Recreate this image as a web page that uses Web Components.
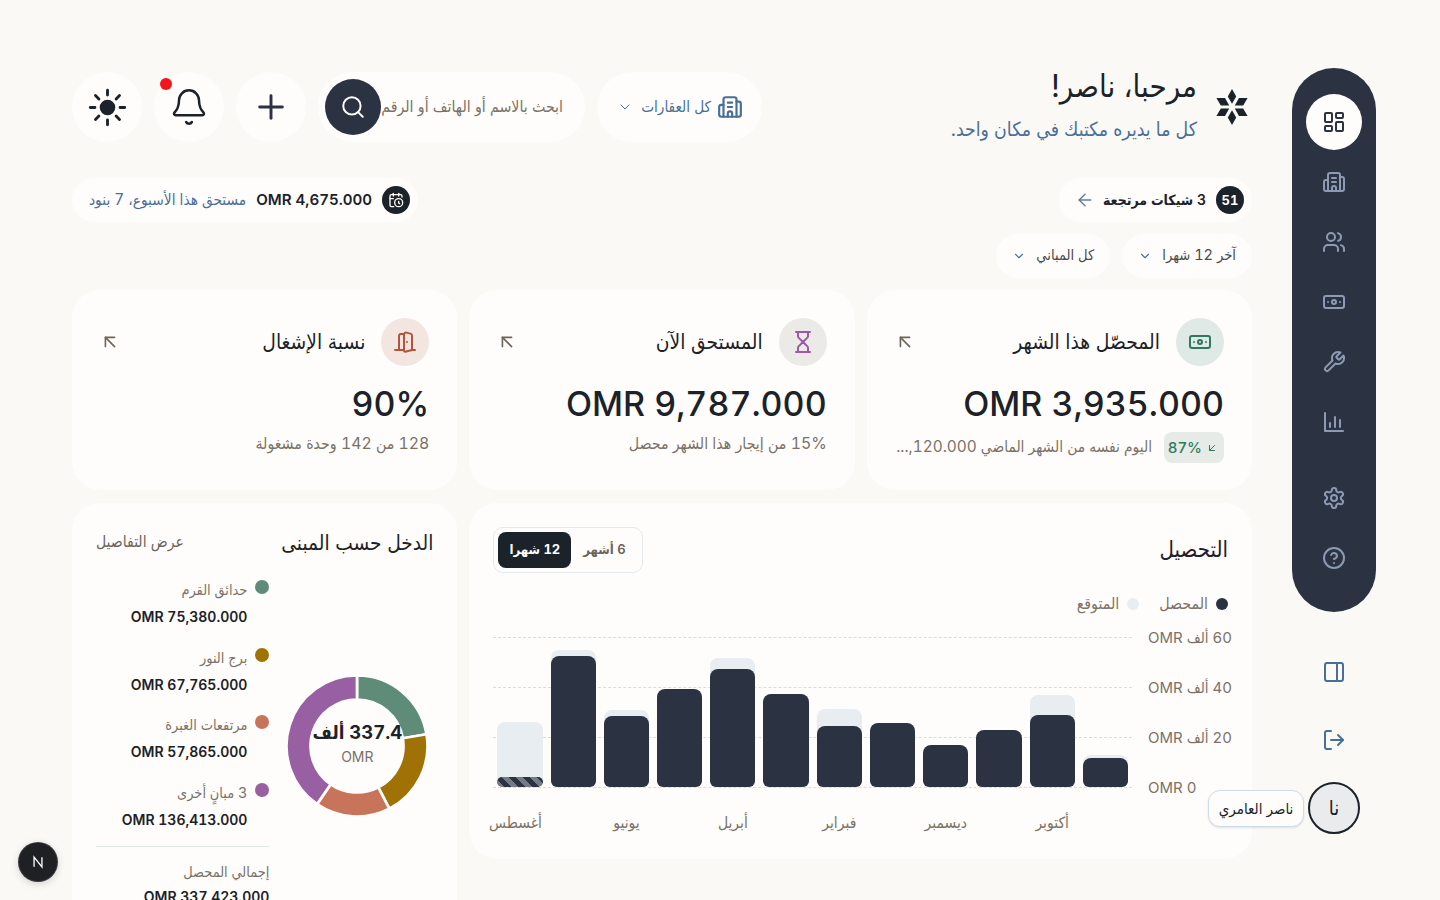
<!DOCTYPE html>
<html lang="ar" dir="rtl">
<head>
<meta charset="utf-8">
<title>لوحة التحكم</title>
<style>
  html, body { margin: 0; height: 900px; overflow: hidden; background: #faf9f6; }
  body { font-family: "Inter", "DejaVu Sans Condensed", "DejaVu Sans", sans-serif; font-variant-numeric: tabular-nums; color: #1b2229; }
</style>
</head>
<body>
<app-shell>
  <side-rail slot="rail"></side-rail>
  <top-bar></top-bar>
  <alert-row></alert-row>
  <filter-row></filter-row>
  <kpi-grid>
    <kpi-card icon="banknote" tone="green" heading="المحصّل هذا الشهر" value="OMR 3,935.000" trend="87%">اليوم نفسه من الشهر الماضي 120.000,...</kpi-card>
    <kpi-card icon="hourglass" tone="purple" heading="المستحق الآن" value="OMR 9,787.000">15% من إيجار هذا الشهر محصل</kpi-card>
    <kpi-card icon="door" tone="terra" heading="نسبة الإشغال" value="90%">128 من 142 وحدة مشغولة</kpi-card>
  </kpi-grid>
  <div class="bottom" style="display:grid;grid-template-columns:repeat(3,1fr);gap:12px;margin-top:13px;align-items:start">
    <collect-chart style="grid-column:span 2"></collect-chart>
    <income-donut></income-donut>
  </div>
</app-shell>
<dev-badge></dev-badge>

<script>
const ICONS = {
  dashboard: '<rect x="3" y="3" width="7" height="9" rx="1"/><rect x="14" y="3" width="7" height="5" rx="1"/><rect x="14" y="12" width="7" height="9" rx="1"/><rect x="3" y="16" width="7" height="5" rx="1"/>',
  building: '<path d="M10 12h4"/><path d="M10 8h4"/><path d="M14 21v-3a2 2 0 0 0-4 0v3"/><path d="M6 10H4a2 2 0 0 0-2 2v7a2 2 0 0 0 2 2h16a2 2 0 0 0 2-2V9a2 2 0 0 0-2-2h-2"/><path d="M6 21V5a2 2 0 0 1 2-2h8a2 2 0 0 1 2 2v16"/>',
  users: '<path d="M16 21v-2a4 4 0 0 0-4-4H6a4 4 0 0 0-4 4v2"/><path d="M16 3.128a4 4 0 0 1 0 7.744"/><path d="M22 21v-2a4 4 0 0 0-3-3.870"/><circle cx="9" cy="7" r="4"/>',
  banknote: '<rect x="2" y="6" width="20" height="12" rx="2"/><circle cx="12" cy="12" r="2"/><path d="M6 12h.01M18 12h.01"/>',
  wrench: '<path d="M14.700 6.300a1 1 0 0 0 0 1.400l1.600 1.600a1 1 0 0 0 1.400 0l3.770-3.770a6 6 0 0 1-7.940 7.940l-6.910 6.910a2.120 2.120 0 0 1-3-3l6.910-6.910a6 6 0 0 1 7.940-7.940l-3.760 3.760z"/>',
  chart: '<path d="M3 3v18h18"/><path d="M8 17v-4"/><path d="M13 17V7"/><path d="M18 17V10"/>',
  settings: '<path d="M12.220 2h-.44a2 2 0 0 0-2 2v.18a2 2 0 0 1-1 1.730l-.43.25a2 2 0 0 1-2 0l-.15-.08a2 2 0 0 0-2.730.73l-.22.38a2 2 0 0 0 .73 2.730l.15.1a2 2 0 0 1 1 1.720v.51a2 2 0 0 1-1 1.740l-.15.09a2 2 0 0 0-.73 2.730l.22.38a2 2 0 0 0 2.730.73l.15-.08a2 2 0 0 1 2 0l.43.25a2 2 0 0 1 1 1.730V20a2 2 0 0 0 2 2h.44a2 2 0 0 0 2-2v-.18a2 2 0 0 1 1-1.730l.43-.25a2 2 0 0 1 2 0l.15.08a2 2 0 0 0 2.730-.73l.22-.39a2 2 0 0 0-.73-2.730l-.15-.08a2 2 0 0 1-1-1.740v-.5a2 2 0 0 1 1-1.740l.15-.09a2 2 0 0 0 .73-2.730l-.22-.38a2 2 0 0 0-2.730-.73l-.15.08a2 2 0 0 1-2 0l-.43-.25a2 2 0 0 1-1-1.730V4a2 2 0 0 0-2-2z"/><circle cx="12" cy="12" r="3"/>',
  help: '<circle cx="12" cy="12" r="10"/><path d="M9.090 9a3 3 0 0 1 5.830 1c0 2-3 3-3 3"/><path d="M12 17h.01"/>',
  panel: '<rect x="3" y="3" width="18" height="18" rx="2"/><path d="M15 3v18"/>',
  logout: '<path d="M16 17l5-5-5-5"/><path d="M21 12H9"/><path d="M9 21H5a2 2 0 0 1-2-2V5a2 2 0 0 1 2-2h4"/>',
  bell: '<path d="M10.268 21a2 2 0 0 0 3.464 0"/><path d="M3.262 15.326A1 1 0 0 0 4 17h16a1 1 0 0 0 .74-1.673C19.410 13.956 18 12.499 18 8A6 6 0 0 0 6 8c0 4.499-1.411 5.956-2.738 7.326"/>',
  plus: '<path d="M3.500 12h17"/><path d="M12 3.500v17"/>',
  sun: '<circle cx="12" cy="12" r="4.350" fill="currentColor" stroke="none"/><path d="M12 2.400v2.600M12 19v2.600M2.400 12H5M19 12h2.600M5.300 5.300l1.900 1.900M16.800 16.800l1.900 1.900M5.300 18.700l1.900-1.900M16.800 7.200l1.900-1.900"/>',
  search: '<circle cx="11" cy="11" r="8"/><path d="m21 21-4.300-4.300"/>',
  chevron: '<path d="m6 9 6 6 6-6"/>',
  arrowLeft: '<path d="m12 19-7-7 7-7"/><path d="M19 12H5"/>',
  arrowUpLeft: '<path d="M7 17V7h10"/><path d="M17 17 7 7"/>',
  arrowDownLeft: '<path d="M17 7 7 17"/><path d="M17 17H7V7"/>',
  calendarClock: '<path d="M21 7.500V6a2 2 0 0 0-2-2H5a2 2 0 0 0-2 2v14a2 2 0 0 0 2 2h3.500"/><path d="M16 2v4"/><path d="M8 2v4"/><path d="M3 10h5"/><path d="M17.500 17.500 16 16.300V14"/><circle cx="16" cy="16" r="6"/>',
  hourglass: '<path d="M5 22h14"/><path d="M5 2h14"/><path d="M17 22v-4.172a2 2 0 0 0-.586-1.414L12 12l-4.414 4.414A2 2 0 0 0 7 17.828V22"/><path d="M7 2v4.172a2 2 0 0 0 .586 1.414L12 12l4.414-4.414A2 2 0 0 0 17 6.172V2"/>',
  door: '<path d="M11 20H2"/><path d="M11 4.562v16.157a1 1 0 0 0 1.242.97L19 20V5.562a2 2 0 0 0-1.515-1.940l-4-1A2 2 0 0 0 11 4.561z"/><path d="M11 4H8a2 2 0 0 0-2 2v14"/><path d="M14 12h.01"/><path d="M22 20h-3"/>'
};

class UiIcon extends HTMLElement {
  connectedCallback() {
    const size = this.getAttribute('size') || 24;
    const sw = this.getAttribute('sw') || 2;
    this.attachShadow({ mode: 'open' }).innerHTML = `
      <style>:host { display: inline-flex; flex: none; } svg { display: block; }</style>
      <svg width="${size}" height="${size}" viewBox="0 0 24 24" fill="none" stroke="currentColor" stroke-width="${sw}" stroke-linecap="round" stroke-linejoin="round">${ICONS[this.getAttribute('name')]}</svg>`;
  }
}
customElements.define('ui-icon', UiIcon);

class AppShell extends HTMLElement {
  constructor() {
    super();
    this.attachShadow({ mode: 'open' }).innerHTML = `
      <style>
        :host { display: flex; gap: 40px; padding: 68px 64px 0 72px; }
        main { flex: 1; min-width: 0; padding-top: 4px; display: flex; flex-direction: column; }
      </style>
      <slot name="rail"></slot>
      <main><slot></slot></main>`;
  }
}
customElements.define('app-shell', AppShell);

class SideRail extends HTMLElement {
  connectedCallback() {
    const item = (name, active) => `<a class="item ${active ? 'active' : ''}"><ui-icon name="${name}"></ui-icon></a>`;
    this.attachShadow({ mode: 'open' }).innerHTML = `
      <style>
        :host { display: flex; flex-direction: column; align-items: center; width: 84px; flex: none; }
        nav {
          width: 84px; box-sizing: border-box; padding: 26px 14px;
          background: #2b3342; border-radius: 42px;
          display: flex; flex-direction: column; gap: 4px; color: #8d9ab3;
        }
        .item { width: 56px; height: 56px; border-radius: 50%; display: flex; align-items: center; justify-content: center; }
        .active { background: #fffdfb; color: #2b3342; }
        .sep { height: 12px; }
        .low { margin-top: 32px; display: flex; flex-direction: column; gap: 12px; color: #4a6f96; }
        .who { position: relative; margin-top: 14px; width: 52px; height: 52px; box-sizing: border-box; border: 2px solid #1b2229;
          border-radius: 50%; background: #e9ebed; display: flex; align-items: center; justify-content: center; font-size: 20px; }
        .tip {
          position: absolute; right: calc(100% + 6px); top: 6px; height: 37px; box-sizing: border-box; width: 96px;
          display: flex; align-items: center; justify-content: center; white-space: nowrap; font-size: 15px;
          background: #fffdfb; border: 1px solid #cfdde9; border-radius: 12px; box-shadow: 0 1px 2px rgba(60,90,120,.16);
        }
      </style>
      <nav>
        ${item('dashboard', true)}${item('building')}${item('users')}${item('banknote')}${item('wrench')}${item('chart')}
        <div class="sep"></div>
        ${item('settings')}${item('help')}
      </nav>
      <div class="low">${item('panel')}${item('logout')}</div>
      <div class="who">نا<span class="tip">ناصر العامري</span></div>`;
  }
}
customElements.define('side-rail', SideRail);

class RoundBtn extends HTMLElement {
  constructor() {
    super();
    this.attachShadow({ mode: 'open' }).innerHTML = `
      <style>
        :host { display: flex; position: relative; width: 70px; height: 70px; border-radius: 50%; background: #fffdfb;
          align-items: center; justify-content: center; flex: none; }
        :host([dot])::after { content: ""; position: absolute; left: 6px; top: 6px; width: 12px; height: 12px; border-radius: 50%; background: #f5141c; }
      </style>
      <slot></slot>`;
  }
}
customElements.define('round-btn', RoundBtn);

class PillBox extends HTMLElement {
  constructor() {
    super();
    this.attachShadow({ mode: 'open' }).innerHTML = `
      <style>
        :host { display: inline-flex; align-items: center; gap: var(--gap, 10px); height: var(--h, 44px); padding: var(--pad, 0 16px);
          box-sizing: border-box; background: #fffdfb; border-radius: 999px; white-space: nowrap; flex: none; font-size: 14.600px; }
      </style>
      <slot></slot>`;
  }
}
customElements.define('pill-box', PillBox);

class TopBar extends HTMLElement {
  connectedCallback() {
    this.attachShadow({ mode: 'open' }).innerHTML = `
      <style>
        :host { display: flex; justify-content: space-between; align-items: stretch; height: 70px; }
        .hello { display: flex; align-items: center; gap: 17px; }
        .star { margin-inline-start: 2px; display: block; }
        h1 { margin: -2px 0 0; font-size: 31px; line-height: 34px; font-weight: 400; color: #1b2229; }
        p { margin: 12px 0 0; font-size: 19.300px; line-height: 28px; color: #4a6f96; }
        .tools { display: flex; gap: 12px; }
        .filter { --h: 70px; --pad: 0 19px 0 0; --gap: 6px; width: 165px; color: #4a6f96; }
        .search { width: 267px; height: 70px; box-sizing: border-box; padding: 0 22px 0 7px; border-radius: 35px; background: #fffdfb;
          display: flex; align-items: center; font-size: 15.800px; color: #7a7268; white-space: nowrap; justify-content: space-between; }
        .search span:first-child { margin-top: -2px; }
        .go { flex: none; width: 56px; height: 56px; border-radius: 50%; background: #2b3342; color: #fffdfb; display: flex; align-items: center; justify-content: center; }
        .txt { font-size: 15.200px; margin-top: -2px; }
      </style>
      <div class="hello">
        <svg class="star" width="36" height="36" viewBox="-18 -18 36 36" fill="#1b2229">
          <polygon points="0,-18 4.200,-10.500 0,-3.200 -4.200,-10.500"/>
          <polygon points="0,-18 4.200,-10.500 0,-3.200 -4.200,-10.500" transform="rotate(60)"/>
          <polygon points="0,-18 4.200,-10.500 0,-3.200 -4.200,-10.500" transform="rotate(120)"/>
          <polygon points="0,-18 4.200,-10.500 0,-3.200 -4.200,-10.500" transform="rotate(180)"/>
          <polygon points="0,-18 4.200,-10.500 0,-3.200 -4.200,-10.500" transform="rotate(240)"/>
          <polygon points="0,-18 4.200,-10.500 0,-3.200 -4.200,-10.500" transform="rotate(300)"/>
        </svg>
        <div>
          <h1>مرحبا، ناصر!</h1>
          <p>كل ما يديره مكتبك في مكان واحد.</p>
        </div>
      </div>
      <div class="tools">
        <pill-box class="filter"><ui-icon name="building" size="26" sw="2"></ui-icon><span class="txt">كل العقارات</span><ui-icon name="chevron" size="16" sw="1.500" style="margin-inline-start:2px"></ui-icon></pill-box>
        <div class="search"><span>ابحث بالاسم أو الهاتف أو الرقم</span><span class="go"><ui-icon name="search" size="26" sw="1.800"></ui-icon></span></div>
        <round-btn><ui-icon name="plus" size="32" sw="2.200" style="color:#2b3342"></ui-icon></round-btn>
        <round-btn dot><ui-icon name="bell" size="40" sw="1.500"></ui-icon></round-btn>
        <round-btn><ui-icon name="sun" size="43" sw="1.600"></ui-icon></round-btn>
      </div>`;
  }
}
customElements.define('top-bar', TopBar);

class AlertRow extends HTMLElement {
  connectedCallback() {
    this.attachShadow({ mode: 'open' }).innerHTML = `
      <style>
        :host { display: flex; justify-content: space-between; margin-top: 36px; }
        .disc { width: 28px; height: 28px; border-radius: 50%; background: #1b2229; color: #fffdfb; display: flex; align-items: center; justify-content: center; font-size: 13px; font-weight: 700; flex: none; }
        b { font-size: 15.100px; font-weight: 600; margin-top: -2px; }
        b.ar { font-size: 14px; }
        pill-box { --pad: 0 8px 0 16px; --gap: 10px; }
        .blue { color: #4a6f96; font-size: 15.300px; font-weight: 400; margin-top: -2px; }
        .arrow { color: #5f7d9c; margin-inline-start: -2px; }
      </style>
      <pill-box><span class="disc">51</span><b class="ar">3 شيكات مرتجعة</b><ui-icon class="arrow" name="arrowLeft" size="20" sw="1.700"></ui-icon></pill-box>
      <pill-box><span class="disc"><ui-icon name="calendarClock" size="16"></ui-icon></span><b>OMR 4,675.000</b><span class="blue" style="padding-inline-end:1px">مستحق هذا الأسبوع، 7 بنود</span></pill-box>`;
  }
}
customElements.define('alert-row', AlertRow);

class FilterRow extends HTMLElement {
  connectedCallback() {
    this.attachShadow({ mode: 'open' }).innerHTML = `
      <style>
        :host { display: flex; gap: 12px; margin-top: 12px; color: #4a4a4a; }
        pill-box { --gap: 10px; }
        span { margin-top: -3px; }
        ui-icon { color: #4a6f96; }
      </style>
      <pill-box><span>آخر 12 شهرا</span><ui-icon name="chevron" size="14"></ui-icon></pill-box>
      <pill-box><span>كل المباني</span><ui-icon name="chevron" size="14"></ui-icon></pill-box>`;
  }
}
customElements.define('filter-row', FilterRow);

class KpiGrid extends HTMLElement {
  constructor() {
    super();
    this.attachShadow({ mode: 'open' }).innerHTML = `
      <style>:host { display: grid; grid-template-columns: repeat(3, 1fr); gap: 12px; margin-top: 12px; }</style>
      <slot></slot>`;
  }
}
customElements.define('kpi-grid', KpiGrid);

const TONES = {
  green: ['#dfe9e6', '#2f7a5f'],
  purple: ['#eceae7', '#9b59a8'],
  terra: ['#f3e6e1', '#b5533c']
};

class KpiCard extends HTMLElement {
  connectedCallback() {
    const [bg, fg] = TONES[this.getAttribute('tone')];
    const trend = this.getAttribute('trend');
    this.attachShadow({ mode: 'open' }).innerHTML = `
      <style>
        :host { display: block; height: 200px; box-sizing: border-box; padding: 28px; background: #fffdfb; border-radius: 28px; min-width: 0; }
        .head { display: flex; align-items: center; gap: 16px; }
        .ico { width: 48px; height: 48px; border-radius: 50%; display: flex; align-items: center; justify-content: center; flex: none; }
        h3 { margin: -2px 0 0; flex: 1; font-size: 20.800px; font-weight: 400; }
        .go { color: #6f665b; margin-inline-end: -1px; }
        .val { margin-top: 16px; font-size: 34px; line-height: 44px; font-weight: 500; }
        .sub { margin-top: 6px; display: flex; align-items: flex-start; gap: 12px; font-size: var(--subsize, 15.800px); line-height: 24px; color: #7a7268; }
        .sub span { overflow: hidden; white-space: nowrap; padding-top: var(--subtop, 0); }
        .trend { flex: none; display: flex; align-items: center; justify-content: space-between; gap: 4px; height: 31px; width: 60px; box-sizing: border-box; padding: 0 6px; background: #e6ebe8; color: #2f7a5f; border-radius: 8px; font-size: 15px; font-weight: 500; }
      </style>
      <div class="head">
        <div class="ico" style="background:${bg};color:${fg}"><ui-icon name="${this.getAttribute('icon')}" size="24"></ui-icon></div>
        <h3>${this.getAttribute('heading')}</h3>
        <ui-icon class="go" name="arrowUpLeft" size="22" sw="1.800"></ui-icon>
      </div>
      <div class="val">${this.getAttribute('value')}</div>
      <div class="sub" style="${trend ? '--subtop:3px;--subsize:15.400px' : ''}">
        ${trend ? `<div class="trend"><ui-icon name="arrowDownLeft" size="12"></ui-icon>${trend}</div>` : ''}
        <span><slot></slot></span>
      </div>`;
  }
}
customElements.define('kpi-card', KpiCard);

// order is right to left, as on screen
const MONTHS = [
  { got: 29.500, due: 32 },
  { m: 'أكتوبر', got: 72, due: 92 },
  { got: 57 },
  { m: 'ديسمبر', got: 42 },
  { got: 64 },
  { m: 'فبراير', got: 61, due: 78 },
  { got: 93 },
  { m: 'أبريل', got: 118, due: 129 },
  { got: 98 },
  { m: 'يونيو', got: 71, due: 77 },
  { got: 131, due: 137 },
  { m: 'أغسطس', got: 10, due: 65, open: true }
];

class CollectChart extends HTMLElement {
  connectedCallback() {
    const bars = MONTHS.map(r => `
      <div class="col">
        ${r.due ? `<i class="due" style="height:${r.due}px"></i>` : ''}
        <i class="got ${r.open ? 'open' : ''}" style="height:${r.got}px"></i>
      </div>`).join('');
    const labels = MONTHS.map(r => `<span class="${r.open ? 'last' : ''}">${r.m || ''}</span>`).join('');
    this.attachShadow({ mode: 'open' }).innerHTML = `
      <style>
        :host { display: block; height: 356px; box-sizing: border-box; padding: 24px; background: #fffdfb; border-radius: 28px; }
        .head { display: flex; justify-content: space-between; align-items: center; height: 46px; }
        h2 { margin: -2px 0 0; font-size: 22px; font-weight: 400; }
        .seg { display: flex; height: 46px; box-sizing: border-box; padding: 4px; border: 1px solid #e3e9ec; border-radius: 10px; font-size: 13px; font-weight: 600; color: #6b645c; }
        .seg span { display: flex; align-items: center; justify-content: center; padding: 0 12px 2px; border-radius: 8px; }
        .seg .on { background: #1b2229; color: #fffdfb; width: 73px; box-sizing: border-box; padding: 0 0 2px; font-weight: 700; }
        .legend { display: flex; gap: 20px; margin-top: 21px; height: 20px; font-size: 15.800px; line-height: 20px; color: #7a7268; }
        .legend span { display: flex; align-items: center; gap: 8px; }
        .legend i { width: 12px; height: 12px; border-radius: 50%; }
        .plot-row { display: flex; gap: 16px; margin-top: 23px; margin-inline-start: -4px; }
        .y { width: 84px; height: 150px; display: flex; flex-direction: column; justify-content: space-between; flex: none; }
        .y span { height: 0; display: flex; align-items: center; justify-content: flex-end; font-size: 15px; color: #7a7268; white-space: nowrap; }
        .plotwrap { flex: 1; min-width: 0; }
        .plot { position: relative; height: 150px; }
        .lines { position: absolute; inset: 0 0 -1px 0; display: flex; flex-direction: column; justify-content: space-between; }
        .lines i { display: block; border-top: 1px dashed #dcdcd8; }
        .bars { position: relative; height: 100%; display: grid; grid-template-columns: repeat(12, 1fr); align-items: end; }
        .col { display: grid; align-items: end; padding: 0 4px; }
        .col i { grid-area: 1 / 1; display: block; }
        .due { background: #e8edf2; border-radius: 8px 8px 6px 6px; }
        .got { background: #2b3342; border-radius: 8px 8px 6px 6px; }
        .open { background-image: repeating-linear-gradient(45deg, rgba(255,255,255,.35) 0 5px, transparent 5px 10px); border-radius: 6px; }
        .months { display: grid; grid-template-columns: repeat(12, 1fr); margin-top: 26px; font-size: 15.500px; line-height: 20px; color: #7a7268; white-space: nowrap; }
        .months span { display: flex; justify-content: center; height: 20px; }
        .last { margin-left: -9px; }
      </style>
      <div class="head">
        <h2>التحصيل</h2>
        <div class="seg"><span>6 أشهر</span><span class="on">12 شهرا</span></div>
      </div>
      <div class="legend">
        <span><i style="background:#2b3342"></i>المحصل</span>
        <span><i style="background:#e8edf2"></i>المتوقع</span>
      </div>
      <div class="plot-row">
        <div class="y"><span>60 ألف OMR</span><span>40 ألف OMR</span><span>20 ألف OMR</span><span>0 OMR</span></div>
        <div class="plotwrap">
          <div class="plot">
            <div class="lines"><i></i><i></i><i></i><i></i></div>
            <div class="bars">${bars}</div>
          </div>
          <div class="months">${labels}</div>
        </div>
      </div>`;
  }
}
customElements.define('collect-chart', CollectChart);

function sector(cx, cy, ro, ri, a0, a1) {
  const p = (r, a) => {
    const t = (a - 90) * Math.PI / 180;
    return `${(cx + r * Math.cos(t)).toFixed(2)} ${(cy + r * Math.sin(t)).toFixed(2)}`;
  };
  const big = a1 - a0 > 180 ? 1 : 0;
  return `M${p(ro, a0)}A${ro} ${ro} 0 ${big} 1 ${p(ro, a1)}L${p(ri, a1)}A${ri} ${ri} 0 ${big} 0 ${p(ri, a0)}Z`;
}

class IncomeDonut extends HTMLElement {
  connectedCallback() {
    const rows = [
      ['حدائق القرم', 'OMR 75,380.000', 75380, '#5f8c78'],
      ['برج النور', 'OMR 67,765.000', 67765, '#a07206'],
      ['مرتفعات الغبرة', 'OMR 57,865.000', 57865, '#c8745a'],
      ['3 مبانٍ أخرى', 'OMR 136,413.000', 136413, '#995fa3']
    ];
    const total = rows.reduce((s, r) => s + r[2], 0);
    let at = 0;
    const arcs = rows.map(r => {
      const next = at + r[2] / total * 360;
      const d = sector(76, 76, 70.500, 46.500, at, next);
      at = next;
      return `<path d="${d}" fill="${r[3]}" stroke="#fffdfb" stroke-width="2.700"/>`;
    }).join('');
    this.attachShadow({ mode: 'open' }).innerHTML = `
      <style>
        :host { display: block; box-sizing: border-box; padding: 24px; background: #fffdfb; border-radius: 28px; min-width: 0; }
        .head { display: flex; justify-content: space-between; align-items: center; height: 32px; }
        h2 { margin: -2px 0 0; font-size: 20.700px; font-weight: 400; }
        .more { font-size: 15.600px; color: #6b645c; margin-top: -3px; }
        .body { display: flex; gap: 12px; align-items: center; margin-top: 19px; }
        .ring { width: 152px; height: 152px; display: grid; flex: none; place-items: center; }
        .ring > * { grid-area: 1 / 1; }
        .mid { text-align: center; white-space: nowrap; margin-top: -3px; }
        .mid b { display: block; font-size: 18.500px; line-height: 26px; font-weight: 700; }
        .mid span { display: block; font-size: 14px; line-height: 24px; color: #7a7268; }
        .list { flex: 1; min-width: 0; display: flex; flex-direction: column; padding-bottom: 4px; }
        .row { display: grid; grid-template-columns: 14px 1fr; column-gap: 8px; margin-bottom: 16.500px; }
        .row i { width: 14px; height: 14px; border-radius: 50%; margin-top: 2px; }
        .name { font-size: 14.400px; line-height: 24px; color: #7a7268; }
        .amt { grid-column: 2; font-size: 14px; line-height: 24px; margin-top: 3px; font-weight: 600; }
        .sum { border-top: 1px solid #e0e9e6; padding-top: 13px; margin-top: -2px; }
        .sum .amt { margin-top: 1px; }
      </style>
      <div class="head"><h2>الدخل حسب المبنى</h2><span class="more">عرض التفاصيل</span></div>
      <div class="body">
        <div class="ring">
          <svg width="152" height="152" viewBox="0 0 152 152">${arcs}</svg>
          <div class="mid"><b>337.4 ألف</b><span>OMR</span></div>
        </div>
        <div class="list">
          ${rows.map(r => `<div class="row"><i style="background:${r[3]}"></i><span class="name">${r[0]}</span><span class="amt">${r[1]}</span></div>`).join('')}
          <div class="sum"><div class="name">إجمالي المحصل</div><div class="amt">OMR 337,423.000</div></div>
        </div>
      </div>`;
  }
}
customElements.define('income-donut', IncomeDonut);

class DevBadge extends HTMLElement {
  constructor() {
    super();
    this.attachShadow({ mode: 'open' }).innerHTML = `
      <style>
        :host { position: fixed; left: 19px; bottom: 19px; width: 38px; height: 38px; border-radius: 50%; background: #1f2024;
          box-shadow: 0 0 0 1px #3a3b40, 0 2px 8px rgba(0,0,0,.2); display: flex; align-items: center; justify-content: center; }
      </style>
      <svg width="14" height="14" viewBox="0 0 16 16" fill="none" stroke="#fff" stroke-width="1.500"><path d="M3.500 13.500V2.500l9 11V2.500"/></svg>`;
  }
}
customElements.define('dev-badge', DevBadge);
</script>
</body>
</html>
